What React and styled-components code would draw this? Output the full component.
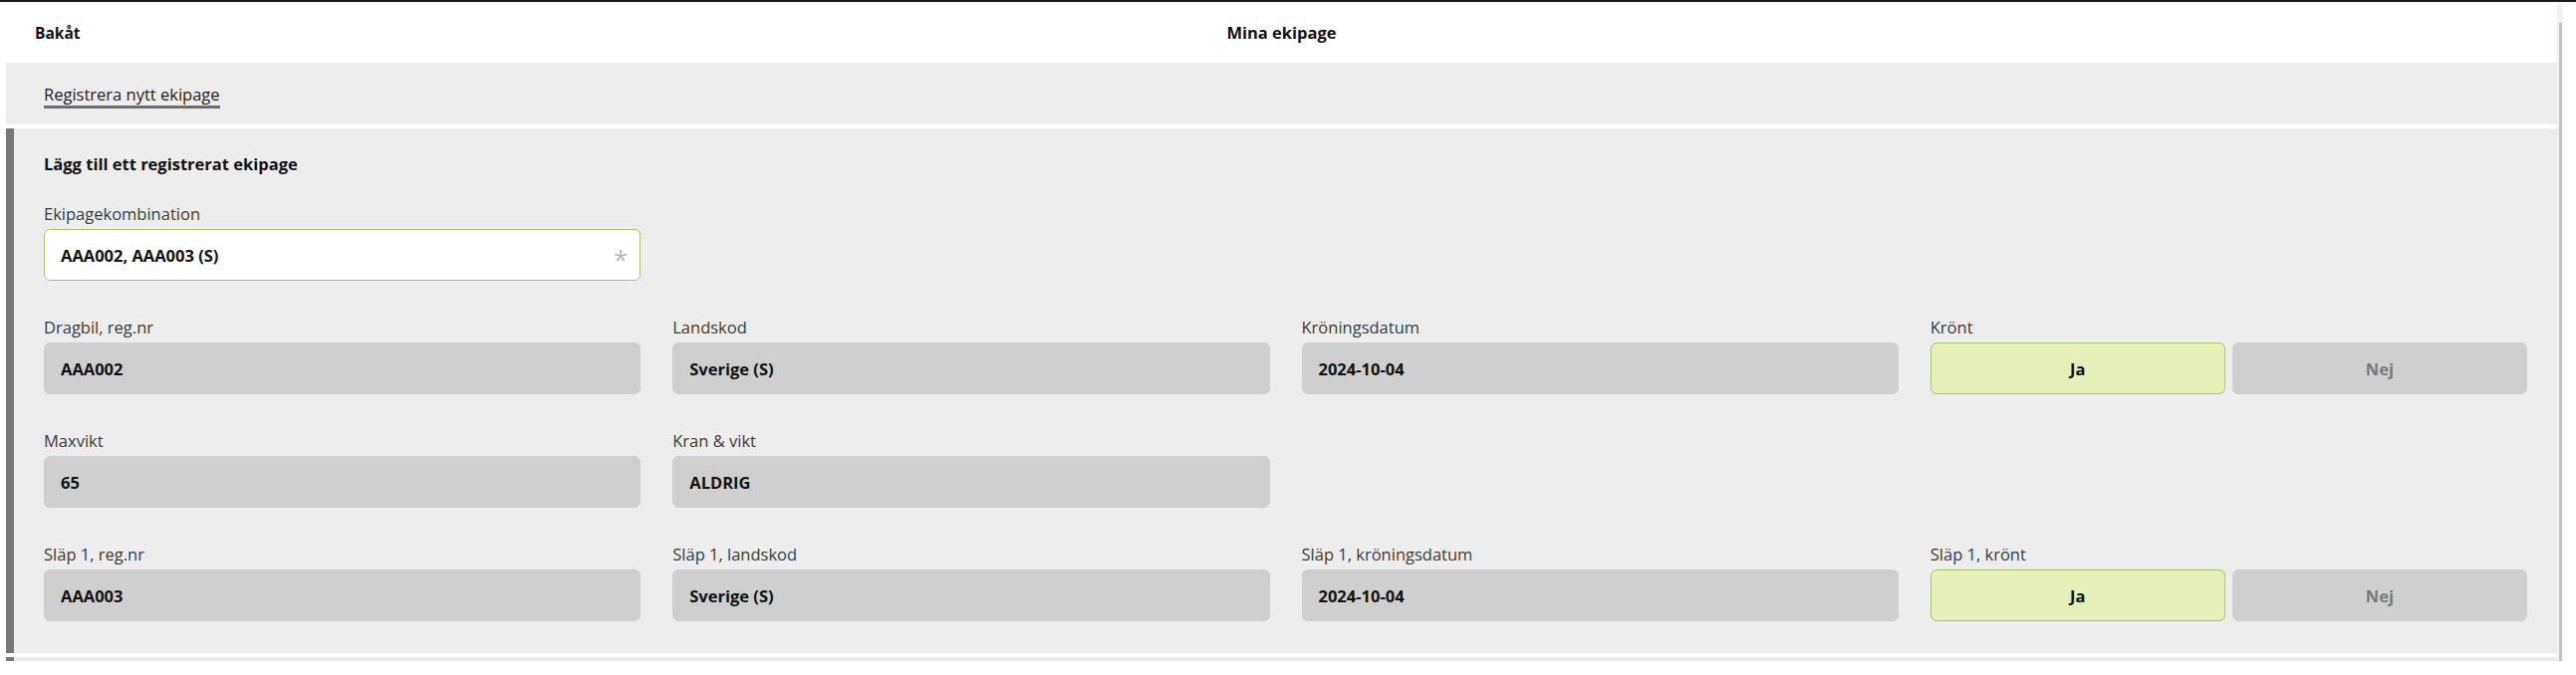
import React from "react";
import styled, { createGlobalStyle } from "styled-components";

const Global = createGlobalStyle`
  html, body { margin: 0; padding: 0; background: #fff; }
  body { font-family: "Open Sans", "Noto Sans", sans-serif; color: #111; }
  * { box-sizing: border-box; }
`;

const TopBar = styled.div`
  height: 2px;
  background: #1b1b1b;
`;

const Frame = styled.div`
  display: flex;
  height: 662px;
`;

const Viewport = styled.div`
  flex: 0 0 2567px;
  overflow: hidden;
  padding-left: 6px;
`;

const ScrollTrack = styled.div`
  flex: 0 0 6px;
  margin-top: 3px;
  background: #f1f1f1;
  display: flex;
  justify-content: center;
  padding-top: 18px;
`;

const ScrollThumb = styled.div`
  width: 3px;
  height: 100%;
  background: #c4c4c4;
`;

const Header = styled.header`
  height: 61px;
  display: grid;
  grid-template-columns: 1fr auto 1fr;
  align-items: center;
  background: #fff;
`;

const BackLink = styled.span`
  padding-left: 29px;
  font-size: 15.5px;
  font-weight: 700;
  color: #111;
`;

const PageTitle = styled.h1`
  margin: 0;
  font-size: 16.5px;
  font-weight: 700;
  color: #111;
`;

const ActionBand = styled.div`
  height: 62px;
  background: #ededed;
  display: flex;
  align-items: center;
  padding-left: 38px;
`;

const TextLink = styled.span`
  font-size: 16.5px;
  color: #222;
  line-height: 22px;
  padding-top: 4px;
  border-bottom: 3px solid #6d6d6d;
`;

const Panel = styled.section`
  margin-top: 4px;
  background: #ededed;
  border-left: 8px solid #777;
  padding: ${(p) => (p.$stub ? "20px 30px" : "25px 30px 32px 30px")};
`;

const PanelTitle = styled.h2`
  margin: 0 0 28px 0;
  font-size: 16.5px;
  line-height: 22px;
  font-weight: 700;
  color: #111;
`;

const Grid = styled.div`
  display: grid;
  grid-template-columns: repeat(4, 1fr);
  column-gap: 32px;
  row-gap: 36px;
`;

const Group = styled.div`
  display: flex;
  flex-direction: column;
  gap: 4px;
`;

const Label = styled.label`
  font-size: 16.5px;
  line-height: 22px;
  color: #3a3a3a;
`;

const Field = styled.div`
  height: 52px;
  border-radius: 6px;
  display: flex;
  align-items: center;
  justify-content: space-between;
  padding: 0 16px;
  font-size: 16.5px;
  font-weight: 700;
  color: #111;
  background: ${(p) => (p.$editable ? "#fff" : "#cfcfcf")};
  border: 1px solid ${(p) => (p.$editable ? "#a7c46e" : "#cfcfcf")};
`;

const Required = styled.span`
  font-size: 26px;
  font-weight: 400;
  color: #b9b9b9;
  line-height: 1;
  margin-top: 8px;
  margin-right: -4px;
`;

const Toggle = styled.div`
  display: grid;
  grid-template-columns: 1fr 1fr;
  gap: 7px;
`;

const ToggleBtn = styled.div`
  height: 52px;
  border-radius: 6px;
  display: flex;
  align-items: center;
  justify-content: center;
  font-size: 16.5px;
  font-weight: 700;
  background: ${(p) => (p.$active ? "#e6efb8" : "#cfcfcf")};
  border: 1px solid ${(p) => (p.$active ? "#a7c46e" : "#cfcfcf")};
  color: ${(p) => (p.$active ? "#111" : "#7a7a7a")};
`;

const Spacer = styled.div``;

const TextField = ({ label, value }) => (
  <Group>
    <Label>{label}</Label>
    <Field>{value}</Field>
  </Group>
);

const YesNo = ({ label }) => (
  <Group>
    <Label>{label}</Label>
    <Toggle>
      <ToggleBtn $active>Ja</ToggleBtn>
      <ToggleBtn>Nej</ToggleBtn>
    </Toggle>
  </Group>
);

export default function App() {
  return (
    <>
      <Global />
      <TopBar />
      <Frame>
        <Viewport>
          <Header>
            <BackLink>Bakåt</BackLink>
            <PageTitle>Mina ekipage</PageTitle>
            <span />
          </Header>
          <ActionBand>
            <TextLink>Registrera nytt ekipage</TextLink>
          </ActionBand>
          <Panel>
            <PanelTitle>Lägg till ett registrerat ekipage</PanelTitle>
            <Grid>
              <Group>
                <Label>Ekipagekombination</Label>
                <Field $editable>
                  AAA002, AAA003 (S)
                  <Required>*</Required>
                </Field>
              </Group>
              <Spacer />
              <Spacer />
              <Spacer />
              <TextField label="Dragbil, reg.nr" value="AAA002" />
              <TextField label="Landskod" value="Sverige (S)" />
              <TextField label="Kröningsdatum" value="2024-10-04" />
              <YesNo label="Krönt" />
              <TextField label="Maxvikt" value="65" />
              <TextField label="Kran & vikt" value="ALDRIG" />
              <Spacer />
              <Spacer />
              <TextField label="Släp 1, reg.nr" value="AAA003" />
              <TextField label="Släp 1, landskod" value="Sverige (S)" />
              <TextField label="Släp 1, kröningsdatum" value="2024-10-04" />
              <YesNo label="Släp 1, krönt" />
            </Grid>
          </Panel>
          <Panel $stub />
        </Viewport>
        <ScrollTrack>
          <ScrollThumb />
        </ScrollTrack>
      </Frame>
    </>
  );
}
